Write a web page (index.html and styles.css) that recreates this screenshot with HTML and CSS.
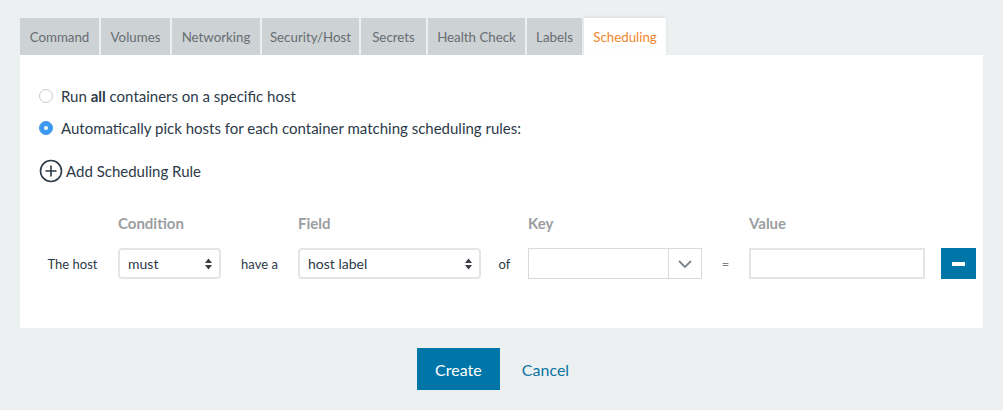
FILE: index.html
```html
<!DOCTYPE html>
<html>
<head>
<meta charset="utf-8">
<link rel="stylesheet" href="styles.css">
</head>
<body>
<div class="page">
  <div class="tabs">
    <div class="tab">Command</div>
    <div class="tab">Volumes</div>
    <div class="tab">Networking</div>
    <div class="tab">Security/Host</div>
    <div class="tab">Secrets</div>
    <div class="tab">Health Check</div>
    <div class="tab">Labels</div>
    <div class="tab active">Scheduling</div>
  </div>
  <div class="panel">
    <div class="radio-row"><span class="radio"></span><span>Run <b>all</b> containers on a specific host</span></div>
    <div class="radio-row second"><span class="radio checked"></span><span>Automatically pick hosts for each container matching scheduling rules:</span></div>
    <div class="add-rule">
      <svg width="24" height="24" viewBox="0 0 24 24"><circle cx="12" cy="12" r="10.5" fill="none" stroke="#2d3a48" stroke-width="1.6"/><path d="M12 6.5v11M6.5 12h11" stroke="#2d3a48" stroke-width="1.6"/></svg>
      <span>Add Scheduling Rule</span>
    </div>
    <div class="rules">
      <div></div>
      <div class="hdr">Condition</div>
      <div></div>
      <div class="hdr">Field</div>
      <div></div>
      <div class="hdr">Key</div>
      <div></div>
      <div class="hdr">Value</div>
      <div></div>
      <div></div>

      <div class="txt first">The host</div>
      <div class="select">must<span class="updown"><svg width="7" height="12" viewBox="0 0 7 12"><path d="M0 5L3.5 0.5L7 5Z M0 7L3.5 11.5L7 7Z" fill="#3a3f45"/></svg></span></div>
      <div class="txt">have a</div>
      <div class="select">host label<span class="updown"><svg width="7" height="12" viewBox="0 0 7 12"><path d="M0 5L3.5 0.5L7 5Z M0 7L3.5 11.5L7 7Z" fill="#3a3f45"/></svg></span></div>
      <div class="txt">of</div>
      <div class="combo"><div class="combo-input"></div><div class="combo-btn"><svg width="14" height="8" viewBox="0 0 14 8"><path d="M1 1l6 6 6-6" fill="none" stroke="#7d868c" stroke-width="1.8"/></svg></div></div>
      <div class="txt eq">=</div>
      <div class="input"></div>
      <div></div>
      <div class="minus"><span></span></div>
    </div>
  </div>
  <div class="footer">
    <button class="btn-create">Create</button>
    <span class="cancel">Cancel</span>
  </div>
</div>
</body>
</html>
```

FILE: styles.css
```css
html, body {
  margin: 0;
  padding: 0;
  background: #ecf0f1;
  font-family: Lato, "Open Sans", sans-serif;
  color: #2d3a48;
}
.page {
  padding: 18px 20px 0 20px;
  width: 963px;
}
.tabs {
  display: flex;
  gap: 2px;
  height: 37px;
}
.tab {
  background: #cdd2d5;
  color: #686d71;
  font-size: 13.3px;
  padding: 0;
  white-space: nowrap;
  display: flex;
  align-items: center;
  justify-content: center;
  height: 37px;
  box-sizing: border-box;
}
.tab:nth-child(1) { width: 79px; }
.tab:nth-child(2) { width: 69px; }
.tab:nth-child(3) { width: 88px; }
.tab:nth-child(4) { width: 97px; }
.tab:nth-child(5) { width: 65px; }
.tab:nth-child(6) { width: 97px; }
.tab:nth-child(7) { width: 55px; }
.tab.active {
  width: 82px;
  background: #fff;
  color: #f0862c;
  box-shadow: 0 -1px 3px rgba(0,0,0,0.08);
}
.panel {
  background: #fff;
  height: 273px;
  box-sizing: border-box;
  padding-top: 32px;
}
.radio-row {
  display: flex;
  align-items: center;
  height: 18px;
  padding-left: 19px;
  font-size: 15px;
  gap: 8px;
  color: #2d3a48;
}
.radio-row b { font-weight: 700; }
.radio-row.second { margin-top: 14px; }
.radio {
  width: 12px;
  height: 12px;
  border: 1px solid #c6cbce;
  border-radius: 50%;
  flex: none;
  box-sizing: content-box;
}
.radio.checked {
  background: #3d98f0;
  border-color: #3d98f0;
  position: relative;
}
.radio.checked::after {
  content: "";
  position: absolute;
  left: 4px;
  top: 4px;
  width: 4px;
  height: 4px;
  border-radius: 50%;
  background: #fff;
}
.add-rule {
  display: flex;
  align-items: center;
  margin-top: 22px;
  padding-left: 19px;
  font-size: 15px;
  gap: 3px;
  height: 24px;
}
.rules {
  display: grid;
  grid-template-columns: 98px 103px 77px 183px 47px 174px 47px 176px 16px 35px;
  grid-template-rows: 24px 31px;
  row-gap: 14px;
  margin-top: 27px;
  align-items: center;
}
.hdr {
  color: #9b9ea1;
  font-size: 15px;
  font-weight: 700;
  padding-top: 2px;
}
.txt {
  font-size: 13px;
  text-align: center;
  color: #2d3a48;
}
.txt.first { padding-left: 7px; }
.txt.eq { font-size: 13px; color: #7a8086; }
.select {
  height: 31px;
  box-sizing: border-box;
  border: 2px solid #e3e6e8;
  border-radius: 4px;
  font-size: 14px;
  display: flex;
  align-items: center;
  justify-content: space-between;
  padding: 0 7px 0 8px;
  color: #2d3a48;
}
.updown { display: flex; align-items: center; }
.combo {
  display: flex;
  height: 31px;
}
.combo-input {
  flex: 1;
  border: 1px solid #d7dbdd;
  border-right: none;
}
.combo-btn {
  width: 34px;
  border: 1px solid #d7dbdd;
  display: flex;
  align-items: center;
  justify-content: center;
  box-sizing: border-box;
}
.input {
  height: 31px;
  box-sizing: border-box;
  border: 2px solid #e3e6e8;
}
.minus {
  height: 31px;
  width: 35px;
  background: #0075a8;
  display: flex;
  align-items: center;
  justify-content: center;
}
.minus span {
  width: 13px;
  height: 4px;
  background: #fff;
}
.footer {
  display: flex;
  justify-content: center;
  align-items: center;
  gap: 22px;
  margin-top: 20px;
  padding-right: 17px;
}
.btn-create {
  width: 83px;
  height: 42px;
  background: #0075a8;
  color: #fff;
  border: none;
  font-family: Lato, sans-serif;
  font-size: 16px;
}
.cancel {
  color: #0b73a4;
  font-size: 16px;
}
```
